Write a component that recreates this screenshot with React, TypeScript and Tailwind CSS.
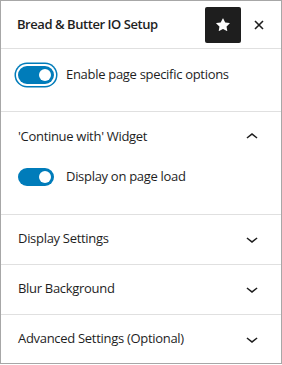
import { useState } from 'react'

function Toggle({ on, focused }: { on: boolean; focused?: boolean }) {
  return (
    <span
      className={
        'relative inline-block h-[18px] w-[36px] shrink-0 rounded-full ' +
        (on ? 'bg-[#007cba]' : 'bg-white border border-[#1e1e1e]') +
        (focused ? ' shadow-[0_0_0_2px_#fff,0_0_0_3.5px_#007cba]' : '')
      }
    >
      <span
        className={
          'absolute top-[3px] h-[12px] w-[12px] rounded-full ' +
          (on ? 'right-[3px] bg-white' : 'left-[3px] bg-[#1e1e1e]')
        }
      />
    </span>
  )
}

function Chevron({ up }: { up?: boolean }) {
  return (
    <svg width="24" height="24" viewBox="0 0 24 24" className="shrink-0">
      {up ? (
        <path d="M6.5 12.4 12 8l5.5 4.4-.9 1.2L12 10l-4.6 3.6-.9-1.2z" fill="#1e1e1e" />
      ) : (
        <path d="M17.5 11.6 12 16l-5.5-4.4.9-1.2L12 14l4.6-3.6 1 1.2z" fill="#1e1e1e" />
      )}
    </svg>
  )
}

function Panel({ title, open, children }: { title: string; open?: boolean; children?: React.ReactNode }) {
  return (
    <div className="border-b border-[#e0e0e0]">
      <div className="flex h-[49px] items-center justify-between pl-[17px] pr-[17px]">
        <span className="text-[13px] font-medium tracking-[-0.3px] text-[#1e1e1e]">{title}</span>
        <Chevron up={open} />
      </div>
      {children}
    </div>
  )
}

export default function App() {
  const [enabled] = useState(true)

  return (
    <div
      className="h-[364px] w-[282px] overflow-hidden border border-[#a7a7a7] bg-white text-[#1e1e1e]"
      style={{ fontFamily: '"Open Sans", "Noto Sans", sans-serif' }}
    >
      <div className="flex h-[48px] items-center border-b border-[#e0e0e0] pl-[16px] pr-[4px]">
        <h2 className="flex-1 text-[13px] font-semibold tracking-[-0.45px]">Bread &amp; Butter IO Setup</h2>
        <button className="flex h-[36px] w-[36px] items-center justify-center rounded-[2px] bg-[#1e1e1e]">
          <svg width="24" height="24" viewBox="0 0 24 24">
            <path d="M11.776 5.454a.25.25 0 0 1 .448 0l1.869 3.792a.25.25 0 0 0 .188.137l4.226.612a.25.25 0 0 1 .139.426l-3.048 2.963a.25.25 0 0 0-.072.222l.72 4.207a.25.25 0 0 1-.362.263l-3.768-1.975a.25.25 0 0 0-.232 0l-3.768 1.975a.25.25 0 0 1-.363-.263l.72-4.207a.25.25 0 0 0-.071-.222L5.254 10.42a.25.25 0 0 1 .139-.426l4.226-.612a.25.25 0 0 0 .188-.137l1.969-3.792Z" fill="#fff" />
          </svg>
        </button>
        <button className="flex h-[36px] w-[36px] items-center justify-center">
          <svg width="24" height="24" viewBox="0 0 24 24">
            <path d="M8 8l8 8M16 8l-8 8" stroke="#1e1e1e" strokeWidth="1.6" />
          </svg>
        </button>
      </div>

      <div className="h-[63px] border-b border-[#e0e0e0] px-[17px] pt-[16px]">
        <label className="flex items-center gap-[12px] text-[13px] tracking-[-0.3px]">
          <Toggle on={enabled} focused />
          <span>Enable page specific options</span>
        </label>
      </div>

      <Panel title="'Continue with' Widget" open>
        <div className="px-[17px] pb-[27px] pt-[6px]">
          <label className="flex items-center gap-[12px] text-[13px] tracking-[-0.3px]">
            <Toggle on />
            <span>Display on page load</span>
          </label>
        </div>
      </Panel>
      <Panel title="Display Settings" />
      <Panel title="Blur Background" />
      <Panel title="Advanced Settings (Optional)" />
    </div>
  )
}
